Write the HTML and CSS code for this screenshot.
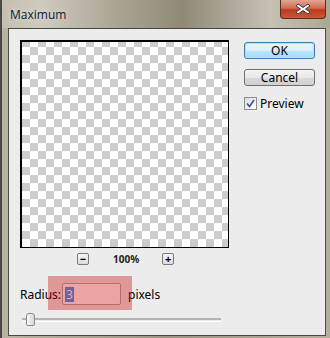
FILE: index.html
```html
<!DOCTYPE html>
<html lang="en">
<head>
  <meta charset="UTF-8">
  <title>Maximum</title>
  <link rel="stylesheet" href="styles.css">
</head>
<body>
  <div class="window">
    <div class="titlebar">
      <span class="title">Maximum</span>
      <div class="close">
        <svg width="18" height="12" viewBox="0 0 18 12">
          <path d="M4 1 L9 4.5 L14 1 L16 3 L11.5 6 L16 9 L14 11 L9 7.5 L4 11 L2 9 L6.5 6 L2 3 Z" fill="#fff" stroke="#3a3a44" stroke-width="1"/>
        </svg>
      </div>
    </div>
    <div class="client">
      <div class="main">
        <div class="preview-col">
          <div class="preview"></div>
          <div class="zoom-row">
            <span class="zbtn">&minus;</span>
            <span class="zoom-val">100%</span>
            <span class="zbtn">+</span>
          </div>
        </div>
        <div class="side">
          <button class="btn btn-ok">OK</button>
          <button class="btn">Cancel</button>
          <label class="check">
            <span class="box">
              <svg width="9" height="9" viewBox="0 0 9 9">
                <path d="M1 4.5 L3.5 7.5 L8 1" fill="none" stroke="#3d4f9a" stroke-width="1.6"/>
              </svg>
            </span>
            Preview
          </label>
        </div>
      </div>
      <div class="radius-row">
        <span class="label">Radius:</span>
        <span class="input"><span class="sel">3</span></span>
        <span class="unit">pixels</span>
        <div class="highlight"></div>
      </div>
      <div class="slider">
        <div class="track"></div>
        <div class="thumb"></div>
      </div>
    </div>
  </div>
</body>
</html>
```

FILE: styles.css
```css
body {
  margin: 0;
  padding: 0;
  font-family: "Noto Sans", Arial, sans-serif;
  font-size: 12px;
  color: #000;
}

.window {
  width: 330px;
  height: 338px;
  box-sizing: border-box;
  display: flex;
  flex-direction: column;
  border-left: 2px solid #4a4844;
  padding: 0 4px 2px 6px;
  background: linear-gradient(to right, #b9b3a3, #9b9582 50%, #b4ae9e);
}

.titlebar {
  height: 28px;
  margin: 0 -4px 0 -6px;
  padding-left: 8px;
  display: flex;
  align-items: flex-start;
  background: linear-gradient(to right, #c4bfb2 0%, #cfcabd 12%, #aaa493 35%, #8f8976 55%, #b2ad9e 72%, #c6c1b3 82%, #aca695 100%);
}

.title {
  font-family: "Open Sans", sans-serif;
  font-size: 12px;
  line-height: 30px;
  color: #0c1a2c;
  text-shadow: 0 0 6px rgba(255, 255, 255, 0.7);
}

.close {
  margin-left: auto;
  margin-right: 4px;
  width: 46px;
  height: 19px;
  box-sizing: border-box;
  border: 1px solid #5a2c22;
  border-top: none;
  border-radius: 0 0 4px 4px;
  background: linear-gradient(to bottom, #e3a594 0%, #d06a50 45%, #bc3a1c 55%, #c9583a 100%);
  display: flex;
  align-items: center;
  justify-content: center;
}

.client {
  flex: 1;
  position: relative;
  border: 1px solid #4a4a48;
  background: #ececec;
  padding: 11px 0 0 11px;
  display: flex;
  flex-direction: column;
}

.main {
  display: flex;
  gap: 15px;
}

.preview {
  width: 206px;
  height: 205px;
  border: 1px solid #000;
  border-width: 2px 1px 1px 2px;
  background-color: #fff;
  background-image:
    linear-gradient(45deg, #cccccc 25%, transparent 25%, transparent 75%, #cccccc 75%),
    linear-gradient(45deg, #cccccc 25%, transparent 25%, transparent 75%, #cccccc 75%);
  background-size: 16px 16px;
  background-position: 8px -3px, 0 5px;
}

.zoom-row {
  display: flex;
  align-items: center;
  margin-top: 5px;
  padding-left: 57px;
  height: 12px;
}

.zbtn {
  width: 10px;
  height: 10px;
  border: 1px solid #7a7a7a;
  border-radius: 2px;
  background: linear-gradient(to bottom, #f6f6f6, #dcdcdc);
  font-size: 11px;
  font-weight: bold;
  line-height: 10px;
  text-align: center;
}

.zoom-val {
  margin: 0 23px 0 24px;
  font-size: 10px;
  font-weight: bold;
  color: #222;
}

.side {
  display: flex;
  flex-direction: column;
  padding-top: 2px;
}

.btn {
  width: 71px;
  height: 17px;
  margin: 0 0 10px 0;
  padding: 0;
  border: 1px solid #707070;
  border-radius: 3px;
  background: linear-gradient(to bottom, #f4f4f4 0%, #e8e8e8 50%, #dadada 51%, #d0d0d0 100%);
  font-family: "Noto Sans", Arial, sans-serif;
  font-size: 12px;
  line-height: 15px;
  color: #000;
}

.btn-ok {
  border-color: #3c7fb1;
  background: linear-gradient(to bottom, #eaf6fd 0%, #d9effc 50%, #bee6fd 51%, #a7d9f5 100%);
  box-shadow: inset 0 0 0 1px #a6e6fb;
}

.check {
  display: flex;
  align-items: center;
  gap: 3px;
  margin-top: -1px;
  font-size: 12px;
}

.box {
  width: 11px;
  height: 11px;
  border: 1px solid #8f8f8f;
  background: linear-gradient(135deg, #dcdcdc, #fdfdfd);
  display: flex;
  align-items: center;
  justify-content: center;
}

.radius-row {
  position: relative;
  display: flex;
  align-items: center;
  margin-top: 18px;
  height: 22px;
}

.label {
  width: 42px;
}

.input {
  width: 55px;
  height: 20px;
  border: 1px solid #aaa;
  border-radius: 2px;
  background: #fff;
  display: flex;
  align-items: center;
  padding-left: 2px;
  box-sizing: content-box;
}

.sel {
  background: #3399ff;
  color: #fff;
  padding: 0 1px;
  line-height: 15px;
}

.unit {
  margin-left: 7px;
}

.highlight {
  position: absolute;
  left: 28px;
  top: -7px;
  width: 84px;
  height: 34px;
  background: rgba(202, 0, 0, 0.36);
}

.slider {
  position: relative;
  margin: 7px 0 0 2px;
  width: 199px;
  height: 14px;
}

.track {
  position: absolute;
  left: 0;
  right: 0;
  top: 6px;
  height: 1px;
  border-top: 2px solid #b4b4b4;
  border-bottom: 1px solid #fff;
}

.thumb {
  position: absolute;
  left: 4px;
  top: 1px;
  width: 7px;
  height: 11px;
  border: 1px solid #8a8a8a;
  border-radius: 3px 3px 2px 2px;
  background: linear-gradient(to right, #f8f8f8, #d8d8d8);
}
```
